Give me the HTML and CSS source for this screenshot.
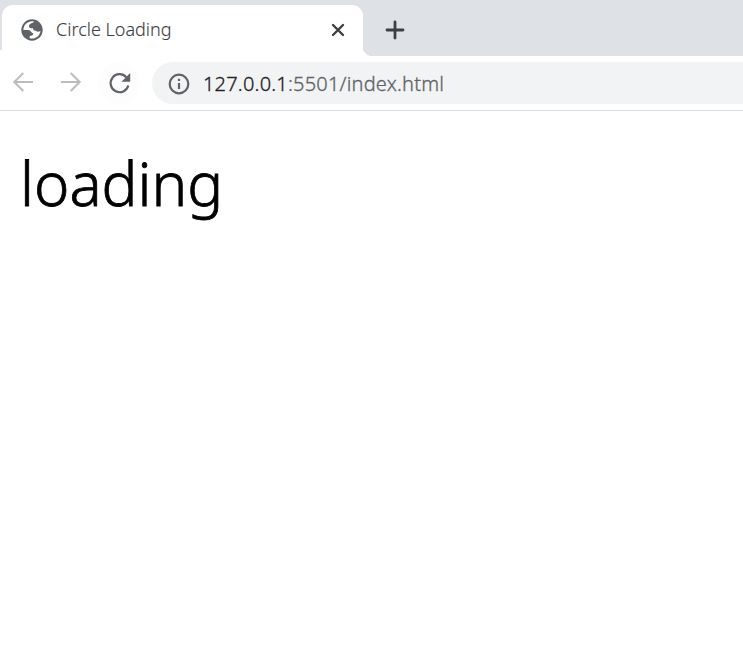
FILE: index.html
```html
<!DOCTYPE html>
<html lang="en">
<head>
<meta charset="utf-8">
<title>Circle Loading</title>
<link rel="stylesheet" href="styles.css">
</head>
<body>
<header class="browser">
  <div class="tabs">
    <div class="tab">
      <svg class="globe" viewBox="0 0 22 22"><circle cx="11" cy="11" r="10.7" fill="#5f6368"/><path d="M13 2.500C11.800 4.600 8 4.200 8 7.200C8 9.300 10 9.200 12 9.200C12 11.400 13.400 11.800 15 11.800C15.700 13 17.600 13 19.500 12C19 16.400 15.300 19.600 11 19.600C10.200 19.600 9.400 19.500 8.700 19.200V17C11.300 17 12.300 16 12.300 14.100C9.500 14 10.200 11 7.500 11H2.400C2.400 5.500 7.500 1.300 13 2.500Z" fill="#fff"/></svg>
      <span class="tab-title">Circle Loading</span>
      <svg class="close" viewBox="0 0 14 14"><path d="M2 2L12 12M12 2L2 12"/></svg>
    </div>
    <div class="tab-rest"><svg class="plus" viewBox="0 0 20 20"><path d="M10 2V18M2 10H18"/></svg></div>
  </div>
  <nav class="toolbar">
    <svg class="arrow" viewBox="0 0 22 22"><path d="M21 11H2.500M11.300 2L2.300 11L11.300 20"/></svg>
    <svg class="arrow next" viewBox="0 0 22 22"><path d="M1 11H19.500M10.700 2L19.700 11L10.700 20"/></svg>
    <span class="reload"><svg viewBox="0 0 24 24"><path class="stroke" d="M20.300 14.500A9 9 0 1 1 18.300 6.200"/><path class="fill" d="M22.200 2V10.700H13.500Z"/></svg></span>
    <div class="address">
      <svg class="info" viewBox="0 0 22 22"><circle cx="11" cy="11" r="9.300"/><path d="M11 10V16M11 5.800V8"/></svg>
      <span class="url"><span class="host">127.0.0.1</span>:5501/index.html</span>
    </div>
  </nav>
</header>
<main class="page">loading</main>
</body>
</html>
```
FILE: styles.css
```css
* { box-sizing: border-box; }
body { margin: 0; background: #fff; font-family: "Noto Sans", sans-serif; font-weight: 300; }
svg { display: block; flex: none; fill: none; }
.browser { height: 111px; border-bottom: 1px solid #dadce0; }
.tabs { display: flex; height: 56px; background: linear-gradient(#dee1e6 0 50px, #fff 50px); }
.tab { position: relative; z-index: 1; display: flex; align-items: center; width: 361px; height: 51px; margin: 5px 0 0 2px; padding: 0 19px 1px; border-radius: 11px 11px 0 0; background: #fff; }
.tab-rest { flex: 1; margin-left: -1px; padding: 20px 0 0 23px; background: radial-gradient(circle at 11px 45px, #dee1e6 0 11px, transparent 11.5px) no-repeat, linear-gradient(#dee1e6, #dee1e6) 11px 0 no-repeat, linear-gradient(#dee1e6, #dee1e6) 0 0 / 12px 45px no-repeat; }
.globe { width: 22px; height: 22px; }
.tab-title { flex: 1; margin: -2px 0 0 13px; color: #3c4043; font-size: 18px; line-height: 26px; white-space: nowrap; -webkit-text-stroke: 0.1px currentColor; }
.close { width: 14px; height: 14px; margin-right: -1px; stroke: #3c4043; stroke-width: 2.4; stroke-linecap: round; }
.plus { width: 20px; height: 20px; stroke: #3c4043; stroke-width: 2.8; stroke-linecap: round; }
.toolbar { display: flex; align-items: center; height: 54px; padding-left: 12px; }
.arrow { width: 22px; height: 22px; margin-top: -2px; stroke: #babcbe; stroke-width: 2; }
.next { margin-left: 26px; }
.reload { display: flex; align-items: center; justify-content: center; width: 42px; height: 42px; margin-left: 16px; border-radius: 50%; background: #fdfdfd; }
.reload svg { width: 24px; height: 24px; margin-left: 1px; }
.stroke { stroke: #5f6368; stroke-width: 2.2; }
.fill { fill: #5f6368; }
.address { display: flex; align-items: center; flex: 1; height: 42px; margin-left: 12px; padding-left: 16px; border-radius: 21px 0 0 21px; background: #f1f3f4; }
.info { width: 22px; height: 22px; margin-top: 1px; stroke: #5f6368; stroke-width: 2.2; }
.url { margin: 1px 0 0 13px; color: #5f6368; font-size: 20px; letter-spacing: 0.2px; line-height: 28px; white-space: nowrap; -webkit-text-stroke: 0.3px currentColor; }
.host { color: #202124; }
.page { padding: 31px 20px; font-size: 60px; line-height: 82px; color: #000; -webkit-text-stroke: 0.8px #000; }
```
